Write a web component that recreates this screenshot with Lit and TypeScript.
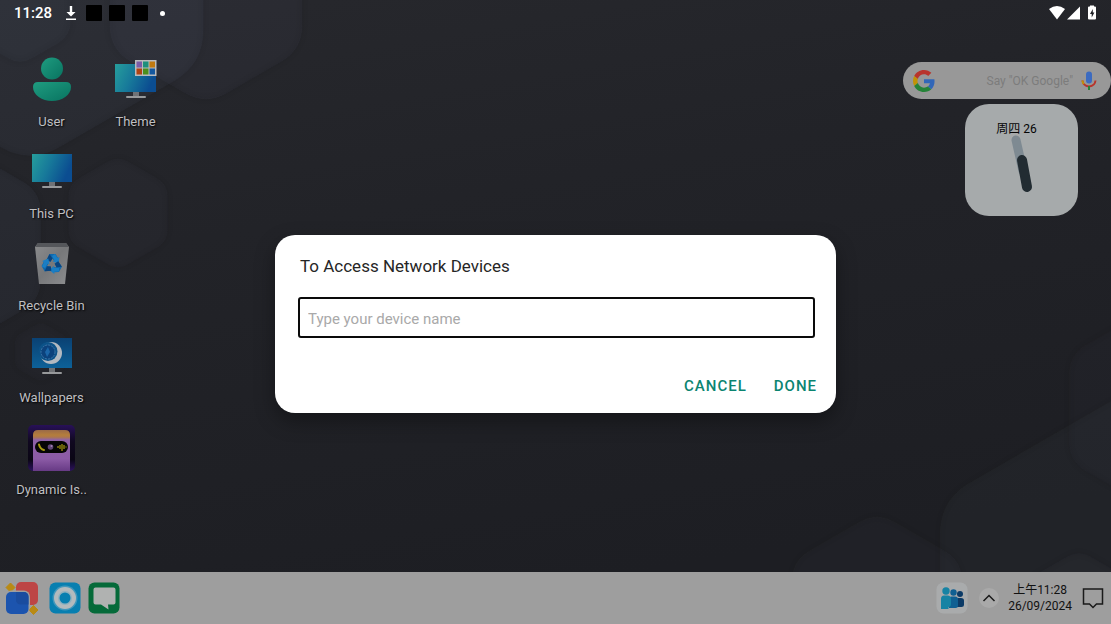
import { LitElement, html, svg, css } from "lit";
import { customElement } from "lit/decorators.js";

const S3 = Math.sqrt(3) / 2;

/** Path of a pointy-top hexagon with softened corners. */
function hexPath(cx: number, cy: number, r: number, corner: number): string {
  const w = r * S3;
  const pts = [
    [cx, cy - r],
    [cx + w, cy - r / 2],
    [cx + w, cy + r / 2],
    [cx, cy + r],
    [cx - w, cy + r / 2],
    [cx - w, cy - r / 2],
  ];
  const t = corner / r;
  const mix = (a: number[], b: number[]) =>
    `${(a[0] + (b[0] - a[0]) * t).toFixed(1)} ${(a[1] + (b[1] - a[1]) * t).toFixed(1)}`;
  return (
    pts
      .map((p, i) => {
        const prev = pts[(i + 5) % 6];
        const next = pts[(i + 1) % 6];
        return `${i ? "L" : "M"}${mix(p, prev)}Q${p[0].toFixed(1)} ${p[1].toFixed(1)} ${mix(p, next)}`;
      })
      .join("") + "Z"
  );
}

const HEXES = [
  [30, -36, 200, 34, 0.045],
  [206, -6, 111, 24, 0.034],
  [20, 7, 58, 14, 0.03],
  [-53, 246, 108, 20, 0.045],
  [118, 213, 57, 12, 0.025],
  [41, 352, 30, 7, 0.016],
  [1148, 620, 240, 34, 0.032],
  [1162, 408, 107, 20, 0.018],
  [877, 610, 98, 20, 0.025],
  [1079, 612, 62, 14, 0.028],
];

/** A screen shape standing on a foot; `base` is the screen's lower edge. */
const monitor = (base: number, screen: unknown) => svg`
  <rect x="21" y=${base} width="6" height="4" fill="#6f7276"/>
  <rect x="14" y=${base + 4} width="20" height="2" rx="1" fill="#97999b"/>
  ${screen}`;

const screenGradient = (id: string) => svg`
  <defs><linearGradient id=${id} x1="0" y1="0" x2="1" y2="0.3">
    <stop offset="0" stop-color="#269e9c"/><stop offset="0.5" stop-color="#17799a"/><stop offset="1" stop-color="#0b4d91"/>
  </linearGradient></defs>`;

const userIcon = html`<svg viewBox="0 0 48 48" aria-hidden="true">
  <defs><linearGradient id="u" x1="0" y1="0" x2="1" y2="1">
    <stop offset="0" stop-color="#1f9c80"/><stop offset="1" stop-color="#087360"/>
  </linearGradient></defs>
  <circle cx="24" cy="13.500" r="11" fill="url(#u)"/>
  <path d="M10 27H38Q43 27 43 32C43 40 34 46 24 46S5 40 5 32Q5 27 10 27Z" fill="url(#u)"/>
</svg>`;

const pcIcon = html`<svg viewBox="0 0 48 48" aria-hidden="true">
  ${screenGradient("p")}
  ${monitor(35, svg`<rect x="4" y="7" width="40" height="28" fill="url(#p)"/>`)}
</svg>`;

const themeIcon = html`<svg viewBox="0 0 48 48" aria-hidden="true">
  ${screenGradient("t")}
  ${monitor(37, svg`<rect x="3" y="9" width="41" height="28" fill="url(#t)"/>`)}
  <rect x="23" y="5" width="21.500" height="16" fill="#b9bbbd"/>
  <rect x="24.500" y="6.500" width="5.500" height="6" fill="#7a5ba8"/>
  <rect x="31" y="6.500" width="5.500" height="6" fill="#1d8f7d"/>
  <rect x="37.500" y="6.500" width="5.500" height="6" fill="#c17a10"/>
  <rect x="24.500" y="13.500" width="5.500" height="6" fill="#b04313"/>
  <rect x="31" y="13.500" width="5.500" height="6" fill="#4c8f1d"/>
  <rect x="37.500" y="13.500" width="5.500" height="6" fill="#14589f"/>
</svg>`;

const binArrow = (angle: number) => svg`<g transform="rotate(${angle} 24 25)">
  <path d="M18.500 21L21.500 15H27.500L30 19L26 22L24.500 19.500L22.500 22.800Z" fill="#0f69ae"/>
  <path d="M27 15L29.500 19L31.500 18L30.500 24.500L24.500 22.500L26.500 21.500L24 17Z" fill="#1a7ec4"/>
  <path d="M18.500 21L21.500 15L24.500 19.500L22.500 22.800Z" fill="#0a4580"/>
</g>`;

const binIcon = html`<svg viewBox="0 0 48 48" aria-hidden="true">
  <defs><linearGradient id="b" x1="0" y1="0" x2="1" y2="1">
    <stop offset="0" stop-color="#8b8c8e"/><stop offset="0.5" stop-color="#77787a"/><stop offset="1" stop-color="#8d8e90"/>
  </linearGradient></defs>
  <path d="M7 8L10 4H38L41 8L37 45H11Z" fill="url(#b)"/>
  <path d="M7 8L10 4H38L41 8Z" fill="#55575b"/>
  ${binArrow(0)}${binArrow(120)}${binArrow(240)}
</svg>`;

const wallpaperIcon = html`<svg viewBox="0 0 48 48" aria-hidden="true">
  <defs><linearGradient id="w" x1="0" y1="0" x2="0" y2="1">
    <stop offset="0" stop-color="#0a4173"/><stop offset="1" stop-color="#0d6198"/>
  </linearGradient></defs>
  ${monitor(37, svg`<rect x="4" y="7" width="40" height="30" fill="url(#w)"/>`)}
  <circle cx="23" cy="22" r="11" fill="#b3b9c0"/>
  <circle cx="20" cy="20.500" r="9.500" fill="#0c5288"/>
  <circle cx="20" cy="21" r="7" fill="#0c427c" stroke="#4a7fb0" stroke-width="0.800" stroke-dasharray="2 1"/>
  <path d="M20 16L22 21L19 26L17 21Z" fill="#1c66a8"/>
</svg>`;

const islandIcon = html`<svg viewBox="0 -1 48 48" aria-hidden="true">
  <defs>
    <linearGradient id="i" x1="0" y1="0" x2="0" y2="1">
      <stop offset="0" stop-color="#281058"/><stop offset="0.35" stop-color="#100820"/><stop offset="0.75" stop-color="#0a0614"/><stop offset="1" stop-color="#2d1260"/>
    </linearGradient>
    <linearGradient id="j" x1="0" y1="0" x2="0" y2="1">
      <stop offset="0" stop-color="#9a6a48"/><stop offset="0.12" stop-color="#b47d3c"/><stop offset="0.17" stop-color="#ae7848"/><stop offset="0.24" stop-color="#8f62a8"/><stop offset="0.7" stop-color="#8c5ba6"/><stop offset="1" stop-color="#673a85"/>
    </linearGradient>
  </defs>
  <rect x="0" y="1" width="47" height="46" rx="5" fill="url(#i)"/>
  <path d="M5 47V11Q5 6 10 6H37Q42 6 42 11V47Z" fill="url(#j)"/>
  <rect x="7" y="17" width="33" height="12" rx="6" fill="#050505"/>
  <path d="M11 20.500Q12 25 16 26" fill="none" stroke="#a89a10" stroke-width="2" stroke-linecap="round"/>
  <circle cx="22.500" cy="23" r="2.800" fill="#5e4475"/>
  <circle cx="23.500" cy="22" r="1" fill="#a584b5"/>
  <path d="M30 22V24M32 21V25M34 20V27M36 21V25M38 22.500V23.500" stroke="#a89a10" stroke-width="1.200"/>
</svg>`;

const COLUMNS = [
  [
    { name: "User", icon: userIcon },
    { name: "This PC", icon: pcIcon },
    { name: "Recycle Bin", icon: binIcon },
    { name: "Wallpapers", icon: wallpaperIcon },
    { name: "Dynamic Is..", icon: islandIcon },
  ],
  [{ name: "Theme", icon: themeIcon }],
];

@customElement("desk-wallpaper")
class DeskWallpaper extends LitElement {
  static styles = css`
    :host { display: block; }
    svg { display: block; width: 100%; height: 100%; }
  `;
  render() {
    return html`<svg viewBox="0 0 1111 624" preserveAspectRatio="none" aria-hidden="true">
      <defs>
        <linearGradient id="bg" x1="0" y1="0" x2="0.3" y2="1">
          <stop offset="0" stop-color="#27282d"/><stop offset="0.4" stop-color="#222328"/><stop offset="1" stop-color="#1d1e23"/>
        </linearGradient>
        <filter id="soft" x="-20%" y="-20%" width="140%" height="140%"><feGaussianBlur stdDeviation="3"/></filter>
      </defs>
      <rect width="1111" height="624" fill="url(#bg)"/>
      ${HEXES.map(([x, y, r, c, a]) => {
        const d = hexPath(x, y, r, c);
        return svg`
          <path d=${d} fill="none" stroke="#000" stroke-opacity="0.1" stroke-width="4" filter="url(#soft)"/>
          <path d=${d} fill="#a6b0e0" fill-opacity=${a} stroke="#fff" stroke-opacity="0.012"/>`;
      })}
    </svg>`;
  }
}

@customElement("status-bar")
class StatusBar extends LitElement {
  static styles = css`
    :host {
      display: flex;
      align-items: center;
      justify-content: space-between;
      height: 26px;
      padding: 0 13px 0 14px;
      color: #fff;
      font: 500 15px/26px Roboto, sans-serif;
    }
    .group { display: flex; align-items: center; }
    .notes { gap: 7px; }
    .time { margin-right: 5px; }
    .block { width: 16px; height: 16px; border-radius: 1px; background: #000; }
    .dot { width: 5px; height: 5px; margin-left: 5px; border-radius: 50%; background: #fff; }
    svg { display: block; }
  `;
  render() {
    return html`
      <div class="group notes">
        <span class="time">11:28</span>
        <svg width="15" height="16" viewBox="-1 0 15 16" aria-label="Download">
          <path d="M4.800 1H7.200V7H10.500L6 11.500L1.500 7H4.800ZM1 13.500H11V15H1Z" fill="#fff"/>
        </svg>
        <span class="block"></span><span class="block"></span><span class="block"></span>
        <span class="dot"></span>
      </div>
      <div class="group">
        <svg width="50" height="16" viewBox="0 0 50 16" aria-label="Wi-Fi, mobile signal, battery charging">
          <path d="M1 4Q9 -2 17 4L9 14.500Z" fill="#fff"/>
          <path d="M32 1.500V14.500H19Z" fill="#fff"/>
          <path d="M42 1.500V0.500H46V1.500H47Q48 1.500 48 2.500V13.500Q48 14.500 47 14.500H41Q40 14.500 40 13.500V2.500Q40 1.500 41 1.500Z" fill="#fff"/>
          <path d="M44.800 4L42 9H43.700V12.500L46.400 7.500H44.800Z" fill="#1d1e23"/>
        </svg>
      </div>`;
  }
}

@customElement("desk-icons")
class DeskIcons extends LitElement {
  static styles = css`
    :host { display: flex; align-items: flex-start; }
    .column { display: flex; flex-direction: column; }
    .launcher {
      display: flex;
      flex-direction: column;
      align-items: center;
      gap: 11px;
      width: 84px;
      height: 92px;
      padding: 0 1px 0 0;
      border: 0;
      background: none;
      color: #bfbfc1;
      font: 400 13px/16px Roboto, sans-serif;
      text-shadow: 1px 1px 2px #000;
    }
    svg { display: block; width: 48px; height: 48px; overflow: visible; }
  `;
  render() {
    return COLUMNS.map(
      (col) => html`<div class="column">
        ${col.map((a) => html`<button class="launcher" type="button">${a.icon}<span>${a.name}</span></button>`)}
      </div>`
    );
  }
}

@customElement("desk-widgets")
class DeskWidgets extends LitElement {
  static styles = css`
    :host { display: flex; flex-direction: column; align-items: flex-end; gap: 5px; }
    .search {
      display: flex;
      align-items: center;
      box-sizing: border-box;
      width: 208px;
      height: 37px;
      padding: 0 13px 0 10px;
      border-radius: 19px;
      background: #989898;
    }
    .query {
      flex: 1;
      min-width: 0;
      padding: 0 7px 0 0;
      border: 0;
      outline: 0;
      background: none;
      color: #333;
      text-align: right;
      font: 400 12px/18px Roboto, sans-serif;
    }
    .query::placeholder { color: #7c7c7c; opacity: 1; }
    .clock {
      display: flex;
      flex-direction: column;
      align-items: center;
      box-sizing: border-box;
      width: 113px;
      height: 112px;
      margin-right: 33px;
      padding: 17px 10px 0 0;
      border-radius: 24px;
      background: #a6aaab;
      color: #050505;
      font: 400 12px/16px Roboto, "Noto Sans CJK SC", sans-serif;
    }
    .hands { margin-left: 8px; margin-top: -3px; }
    svg { display: block; flex: none; }
  `;
  render() {
    return html`
      <label class="search">
        <svg width="22" height="22" viewBox="0 0 48 48" aria-label="Google">
          <path fill="#b8342c" d="M24 9.500c3.540 0 6.710 1.220 9.210 3.600l6.850-6.850C35.900 2.380 30.470 0 24 0 14.620 0 6.510 5.380 2.560 13.220l7.980 6.190C12.430 13.720 17.740 9.500 24 9.500z"/>
          <path fill="#3267b8" d="M46.980 24.550c0-1.570-.15-3.090-.38-4.550H24v9.020h12.940c-.58 2.960-2.260 5.480-4.780 7.180l7.730 6c4.510-4.180 7.090-10.360 7.090-17.650z"/>
          <path fill="#c19306" d="M10.530 28.590c-.48-1.450-.76-2.990-.76-4.590s.27-3.140.76-4.590l-7.980-6.190C.92 16.460 0 20.120 0 24s.92 7.540 2.560 10.780l7.970-6.190z"/>
          <path fill="#258338" d="M24 48c6.480 0 11.930-2.130 15.890-5.810l-7.730-6c-2.150 1.450-4.920 2.300-8.160 2.300-6.260 0-11.570-4.220-13.470-9.910l-7.980 6.190C6.510 42.620 14.620 48 24 48z"/>
        </svg>
        <input class="query" type="text" aria-label="Search" placeholder='Say "OK Google"' />
        <svg width="18" height="20" viewBox="0 0 18 20" aria-label="Voice search">
          <rect x="6" y="0.500" width="6" height="12" rx="3" fill="#3c6bc0"/>
          <path d="M2.500 9.500Q3 15 9 15.500" fill="none" stroke="#b8342c" stroke-width="2"/>
          <path d="M15.500 9.500Q15 15 9 15.500" fill="none" stroke="#b8342c" stroke-width="2"/>
          <path d="M2.500 9.500Q2.700 11.500 3.700 13" fill="none" stroke="#c19306" stroke-width="2"/>
          <path d="M9 15V19" stroke="#258338" stroke-width="2"/>
        </svg>
      </label>
      <div class="clock">
        <span>周四 26</span>
        <svg class="hands" width="24" height="60" viewBox="0 0 24 60" aria-hidden="true">
          <path d="M7 6L14 37" stroke="#7e8a92" stroke-width="9" stroke-linecap="round"/>
          <path d="M13 26L18 53" stroke="#222c32" stroke-width="10" stroke-linecap="round"/>
        </svg>
      </div>`;
  }
}

@customElement("task-bar")
class TaskBar extends LitElement {
  static styles = css`
    :host {
      display: flex;
      align-items: center;
      justify-content: space-between;
      height: 52px;
      padding: 0 6px 0 4px;
      background: #9e9e9e;
      color: #111;
      font: 400 12px/16px Roboto, "Noto Sans CJK SC", sans-serif;
    }
    .group { display: flex; align-items: center; }
    .apps { gap: 7px; }
    .tray { gap: 9px; }
    .start { margin-right: 2px; }
    .app { display: block; padding: 0; border: 0; background: none; }
    .people { margin-right: 2px; }
    .when { text-align: center; }
    .line { display: block; }
    svg { display: block; }
  `;
  render() {
    return html`
      <div class="group apps">
        <button class="app start" type="button" aria-label="Start">
          <svg width="36" height="34" viewBox="0 0 36 34">
            <rect x="12" y="1" width="22" height="23" rx="5" fill="#bd4545"/>
            <path d="M6.500 2L11 6.500L6.500 11L2 6.500ZM29.500 24.500L34 29L29.500 33.500L25 29Z" fill="#b98a14" stroke="#b98a14" stroke-linejoin="round"/>
            <rect x="1" y="9.500" width="25" height="24.500" rx="6" fill="#9e9e9e"/>
            <rect x="2" y="11" width="22.500" height="22" rx="5" fill="#1c54ae"/>
            <path d="M12 11H19.500Q24.500 11 24.500 16V23.500H17Q12 23.500 12 18.500Z" fill="#1a4c9f"/>
            <path d="M29.500 24.500L34 29L29.500 33.500L25 29Z" fill="#b98a14"/>
          </svg>
        </button>
        <button class="app" type="button" aria-label="Camera">
          <svg width="32" height="32" viewBox="0 0 32 32">
            <rect x="0.500" y="0.500" width="31" height="31" rx="6" fill="#087fb0"/>
            <circle cx="16" cy="16" r="12.500" fill="#4197bb"/>
            <circle cx="16" cy="16" r="11" fill="#b3babd"/>
            <circle cx="16" cy="16" r="7" fill="#8fb1bf"/>
            <circle cx="16" cy="16" r="5.500" fill="#087fb0"/>
          </svg>
        </button>
        <button class="app" type="button" aria-label="Messages">
          <svg width="32" height="32" viewBox="0 0 32 32">
            <rect x="0.500" y="0.500" width="31" height="31" rx="6" fill="#056a39"/>
            <path d="M7.500 5.500H25.500Q27.500 5.500 27.500 7.500V20.500Q27.500 22.500 25.500 22.500H20L20.500 27.500L13 22.500H7.500Q5.500 22.500 5.500 20.500V7.500Q5.500 5.500 7.500 5.500Z" fill="#b0b2b1"/>
          </svg>
        </button>
      </div>
      <div class="group tray">
        <button class="app people" type="button" aria-label="People">
          <svg width="32" height="32" viewBox="0 0 32 32">
            <rect x="0.500" y="0.500" width="31" height="31" rx="7" fill="#a9abac"/>
            <circle cx="24" cy="12" r="3" fill="#0b3a66"/>
            <path d="M20 25V18Q20 16 22 16H25Q28 16 28 18.500V23Q28 25 25.500 25Z" fill="#0b3a66"/>
            <circle cx="17.500" cy="10.500" r="3.200" fill="#0f5f92"/>
            <path d="M13 26V17Q13 14.500 15.500 14.500H19Q22 14.500 22 17.500V23.500Q22 26 19.500 26Z" fill="#0f5f92"/>
            <circle cx="10" cy="9" r="3.700" fill="#1683a4"/>
            <path d="M5 27V17Q5 13.500 8 13.500H11.500Q15 13.500 15 17V22Q15 25 12.500 25V27Z" fill="#1683a4"/>
          </svg>
        </button>
        <button class="app" type="button" aria-label="Show hidden icons">
          <svg width="20" height="20" viewBox="0 0 20 20">
            <circle cx="10" cy="10" r="10" fill="#a9a9a9"/>
            <path d="M4.500 13L10 7.500L15.500 13" fill="none" stroke="#1a1a1a" stroke-width="1.500"/>
          </svg>
        </button>
        <time class="when"><span class="line">上午11:28</span><span class="line">26/09/2024</span></time>
        <button class="app" type="button" aria-label="Notifications">
          <svg width="24" height="24" viewBox="0 0 24 24">
            <path d="M2.500 3H21.500V18H15.500L12 21.500L8.500 18H2.500Z" fill="none" stroke="#1a1a1a" stroke-width="1.500"/>
          </svg>
        </button>
      </div>`;
  }
}

@customElement("network-dialog")
class NetworkDialog extends LitElement {
  static styles = css`
    :host { display: block; width: 100%; max-width: 561px; }
    .dialog {
      box-sizing: border-box;
      padding: 20px 21px 9px 23px;
      border-radius: 20px;
      background: #fff;
      box-shadow: 0 8px 20px rgba(0, 0, 0, 0.35);
      font-family: Roboto, sans-serif;
    }
    .title {
      display: block;
      padding-left: 2px;
      margin-bottom: 20px;
      color: #262626;
      font: 400 17px/22px Roboto, sans-serif;
    }
    .name {
      display: block;
      box-sizing: border-box;
      width: 100%;
      height: 41px;
      padding: 2px 8px 0;
      border: 2px solid #0a0a0a;
      border-radius: 3px;
      outline: 0;
      background: #fff;
      color: #222;
      font: 400 15px/20px Roboto, sans-serif;
    }
    .name::placeholder { color: #a9a9a9; opacity: 1; }
    .actions { display: flex; justify-content: flex-end; gap: 11px; margin: 30px -10px 0 0; }
    .action {
      height: 36px;
      padding: 0 8px;
      border: 0;
      background: none;
      color: #0b8470;
      font: 500 15px/36px Roboto, sans-serif;
      letter-spacing: 1px;
    }
  `;
  render() {
    return html`<form class="dialog" role="dialog" aria-labelledby="title">
      <label class="title" id="title" for="name">To Access Network Devices</label>
      <input class="name" id="name" type="text" placeholder="Type your device name" />
      <div class="actions">
        <button class="action" type="button">CANCEL</button>
        <button class="action" type="button">DONE</button>
      </div>
    </form>`;
  }
}

@customElement("app-root")
class AppRoot extends LitElement {
  static styles = css`
    :host {
      position: relative;
      display: grid;
      grid-template-rows: auto 1fr auto;
      min-height: 100vh;
      overflow: hidden;
      background: #1f2025;
    }
    .wallpaper { position: absolute; inset: 0; }
    .bar { position: relative; }
    .desktop {
      position: relative;
      display: flex;
      justify-content: space-between;
      align-items: flex-start;
      padding: 29px 0 0 10px;
    }
    .widgets { margin-top: 7px; }
    .overlay {
      position: absolute;
      inset: 24px 0 0 0;
      display: flex;
      align-items: center;
      justify-content: center;
    }
  `;
  render() {
    return html`
      <desk-wallpaper class="wallpaper"></desk-wallpaper>
      <status-bar class="bar"></status-bar>
      <main class="desktop">
        <desk-icons></desk-icons>
        <desk-widgets class="widgets"></desk-widgets>
      </main>
      <task-bar class="bar"></task-bar>
      <div class="overlay"><network-dialog></network-dialog></div>`;
  }
}
